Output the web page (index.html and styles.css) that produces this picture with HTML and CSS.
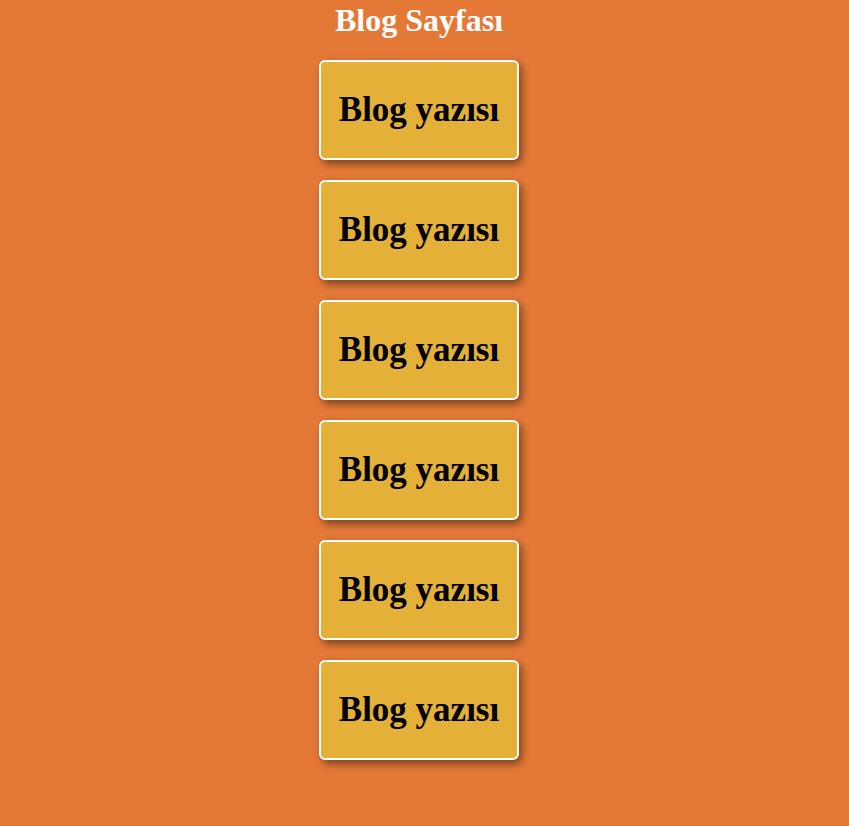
FILE: index.html
```html
<!DOCTYPE html>
<html lang="tr">
<head>
<meta charset="utf-8">
<title>Blog Sayfası</title>
<link rel="stylesheet" href="styles.css">
</head>
<body>
<div class="page">
  <h1 class="title">Blog Sayfası</h1>
  <div class="posts">
    <div class="post">Blog yazısı</div>
    <div class="post">Blog yazısı</div>
    <div class="post">Blog yazısı</div>
    <div class="post">Blog yazısı</div>
    <div class="post">Blog yazısı</div>
    <div class="post">Blog yazısı</div>
  </div>
</div>
</body>
</html>
```
FILE: styles.css
```css
html, body {
  margin: 0;
  padding: 0;
  background: #e47937;
  font-family: "Liberation Serif", "Times New Roman", serif;
}
.page {
  width: 838px;
  padding: 2px 0 40px;
  display: flex;
  flex-direction: column;
  align-items: center;
}
.title {
  margin: 0 0 21px;
  font-size: 32px;
  font-weight: bold;
  color: #ffffff;
}
.posts {
  display: flex;
  flex-direction: column;
  gap: 20px;
}
.post {
  box-sizing: border-box;
  width: 200px;
  height: 100px;
  display: flex;
  align-items: center;
  justify-content: center;
  background: #e5b037;
  border: 2px solid #ffffff;
  border-radius: 6px;
  box-shadow: 3px 4px 8px rgba(0, 0, 0, 0.45);
  font-size: 35px;
  font-weight: bold;
  color: #000;
}
```
